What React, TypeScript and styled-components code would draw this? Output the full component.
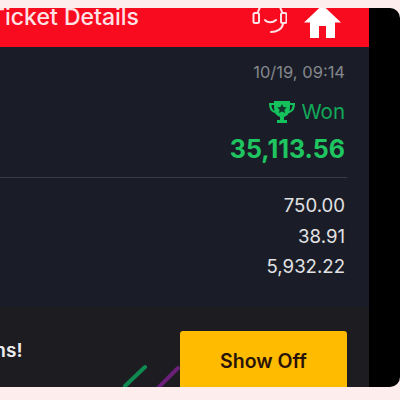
import React from "react";
import styled, { createGlobalStyle } from "styled-components";

const GlobalStyle = createGlobalStyle`
  html, body {
    margin: 0;
    padding: 0;
    width: 400px;
    height: 400px;
    overflow: hidden;
    background: #fdeeed;
    font-family: Inter, "Liberation Sans", sans-serif;
  }
`;

const Frame = styled.div`
  margin-top: 8px;
  width: 400px;
  height: 379px;
  background: #000;
  border-radius: 0 10px 10px 0;
  overflow: hidden;
`;

const Screen = styled.div`
  width: 369px;
  height: 100%;
  display: flex;
  flex-direction: column;
  overflow: hidden;
`;

const Header = styled.header`
  height: 39px;
  flex: none;
  background: #f80a1f;
  display: flex;
  align-items: flex-start;
  justify-content: space-between;
  padding-right: 28px;
  overflow: hidden;
`;

const Title = styled.h1`
  margin: -5px 0 0 -10px;
  font-size: 23px;
  line-height: 28px;
  font-weight: 500;
  color: #fde3e6;
  white-space: nowrap;
`;

const HeaderIcons = styled.div`
  display: flex;
  align-items: flex-start;
  gap: 17px;
  margin-top: -3px;
`;

const Summary = styled.section`
  flex: none;
  height: 260px;
  background: #1a1d27;
  display: flex;
  flex-direction: column;
`;

const Result = styled.div`
  height: 131px;
  flex: none;
  padding: 15px 0 0 0;
  box-sizing: border-box;
  display: flex;
  flex-direction: column;
  align-items: flex-end;
  border-bottom: 1px solid #3a3c44;
  margin-right: 22px;
  padding-right: 2px;
`;

const DateText = styled.div`
  font-size: 16.5px;
  line-height: 20px;
  color: #85878e;
`;

const Status = styled.div`
  margin-top: 17px;
  display: flex;
  align-items: center;
  gap: 6px;
  font-size: 20.5px;
  line-height: 26px;
  color: #12a95a;
`;

const Amount = styled.div`
  margin-top: 9px;
  font-size: 25px;
  line-height: 30px;
  font-weight: 700;
  color: #1fc561;
`;

const Values = styled.div`
  padding: 16px 24px 0 0;
  display: flex;
  flex-direction: column;
  align-items: flex-end;
  gap: 7px;
`;

const Value = styled.div`
  font-size: 18.6px;
  line-height: 23.5px;
  color: #e2e2e4;
`;

const Footer = styled.section`
  position: relative;
  flex: 1;
  background: #1c1c21;
  display: flex;
  justify-content: space-between;
  padding: 24px 22px 0 0;
`;

const Message = styled.div`
  margin: 8px 0 0 -131px;
  font-size: 19px;
  line-height: 24px;
  font-weight: 600;
  color: #ececee;
  white-space: nowrap;
`;

const ShowOff = styled.button`
  width: 167px;
  height: 60px;
  border: 0;
  border-radius: 3px;
  background: #ffbb00;
  color: #2a1408;
  font-family: inherit;
  font-size: 19.5px;
  font-weight: 600;
  padding: 0;
`;

const Confetti = styled.svg`
  position: absolute;
  left: 118px;
  bottom: 0;
`;

const App = () => {
  return (
    <>
      <GlobalStyle />
      <Frame>
        <Screen>
          <Header>
            <Title>Ticket Details</Title>
            <HeaderIcons>
              <svg width="36" height="32" viewBox="0 0 36 32" fill="none" stroke="#fde3e6" strokeWidth="2" strokeLinecap="round">
                <rect x="2.500" y="8" width="5.500" height="10" rx="1.500" />
                <rect x="30" y="8" width="5.500" height="10" rx="1.500" />
                <path d="M7 7c1-3 2-5 4-8" />
                <path d="M31 7c-1-3-2-5-4-8" />
                <path d="M14 15c2 3 8 3 11 0" />
                <path d="M32 19c-1 5-6 8-12 8" />
              </svg>
              <svg width="37" height="33" viewBox="0 0 37 33" fill="#fff">
                <path d="M18.500 0 37 17.500h-6V33H22V21h-7v12H6V17.500H0z" />
              </svg>
            </HeaderIcons>
          </Header>
          <Summary>
            <Result>
              <DateText>10/19, 09:14</DateText>
              <Status>
                <svg width="26" height="24" viewBox="0 0 26 24">
                  <path fill="#14c15c" d="M5 1h16v2h5c0 6-2 9-6 10-1 2-3 3-5 4v3h3v3H8v-3h3v-3c-2-1-4-2-5-4-4-1-6-4-6-10h5zM2.500 5c0 3 1 5 3 6-.5-2-.5-4-.5-6zm21 0h-2.500c0 2 0 4-.5 6 2-1 3-3 3-6z" />
                  <path fill="#12342a" d="m13 4 1.500 3 3.300.4-2.400 2.300.6 3.300-3-1.600-3 1.600.6-3.300-2.400-2.300 3.300-.4z" />
                </svg>
                Won
              </Status>
              <Amount>35,113.56</Amount>
            </Result>
            <Values>
              <Value>750.00</Value>
              <Value>38.91</Value>
              <Value>5,932.22</Value>
            </Values>
          </Summary>
          <Footer>
            <Message>Share your wins!</Message>
            <ShowOff>Show Off</ShowOff>
            <Confetti width="64" height="28" viewBox="0 0 64 28" fill="none" strokeWidth="4" strokeLinecap="round">
              <path d="M7 23 27 4" stroke="#0f8a50" />
              <path d="M35 30 60 5" stroke="#6a1f78" />
            </Confetti>
          </Footer>
        </Screen>
      </Frame>
    </>
  );
};

export default App;
